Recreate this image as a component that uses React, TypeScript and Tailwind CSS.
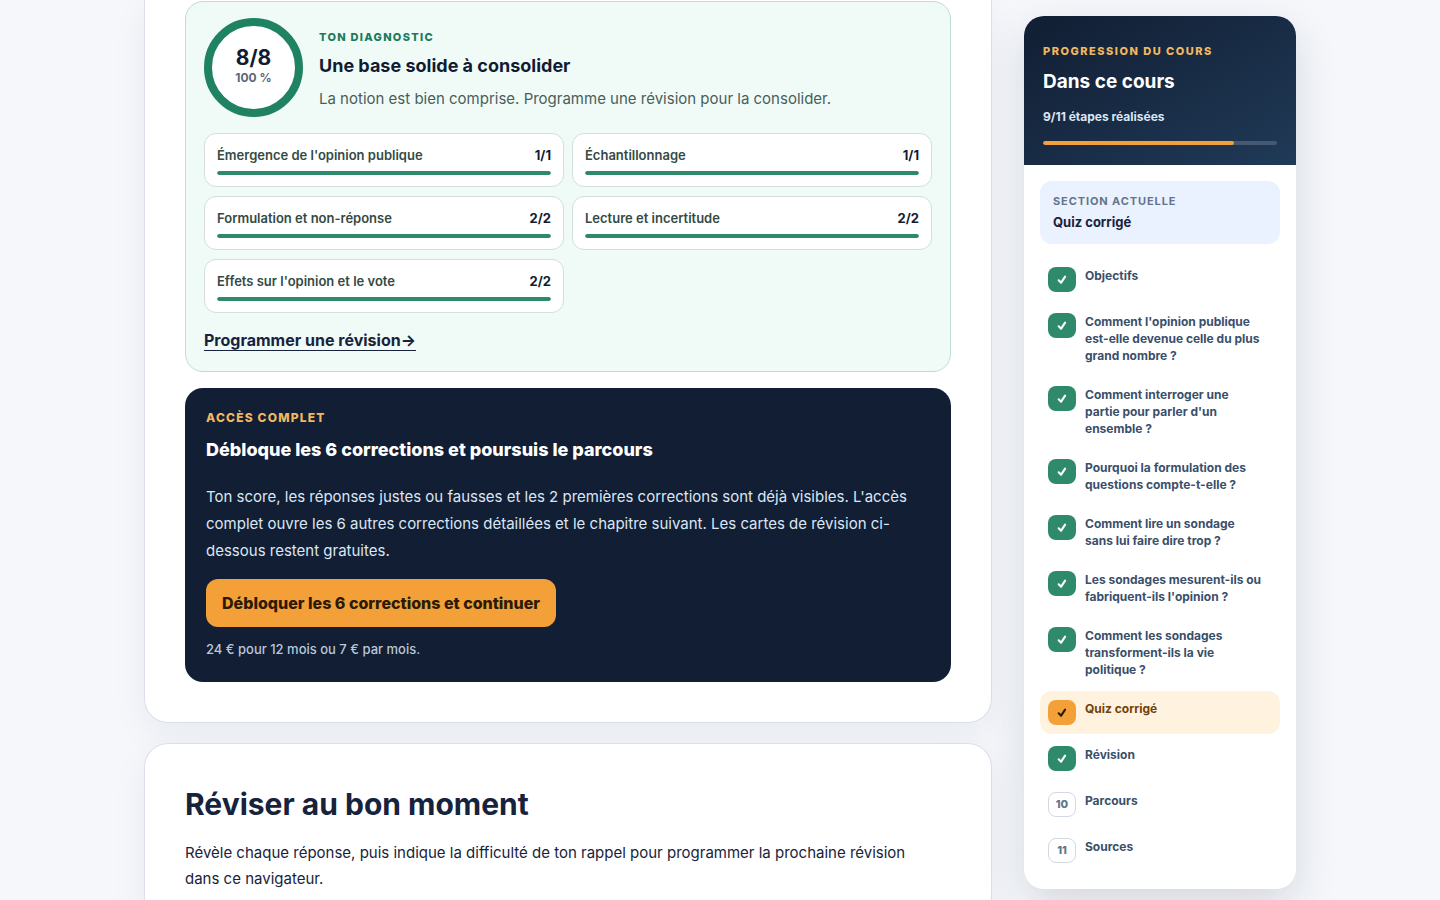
import React from "react";
import clsx from "clsx";

type Notion = { label: string; score: number; total: number };
type Step = { label: string; status: "done" | "current" | "todo" };

const notions: Notion[] = [
  { label: "Émergence de l'opinion publique", score: 1, total: 1 },
  { label: "Échantillonnage", score: 1, total: 1 },
  { label: "Formulation et non-réponse", score: 2, total: 2 },
  { label: "Lecture et incertitude", score: 2, total: 2 },
  { label: "Effets sur l'opinion et le vote", score: 2, total: 2 },
];

const steps: Step[] = [
  { label: "Objectifs", status: "done" },
  { label: "Comment l'opinion publique est-elle devenue celle du plus grand nombre ?", status: "done" },
  { label: "Comment interroger une partie pour parler d'un ensemble ?", status: "done" },
  { label: "Pourquoi la formulation des questions compte-t-elle ?", status: "done" },
  { label: "Comment lire un sondage sans lui faire dire trop ?", status: "done" },
  { label: "Les sondages mesurent-ils ou fabriquent-ils l'opinion ?", status: "done" },
  { label: "Comment les sondages transforment-ils la vie politique ?", status: "done" },
  { label: "Quiz corrigé", status: "current" },
  { label: "Révision", status: "done" },
  { label: "Parcours", status: "todo" },
  { label: "Sources", status: "todo" },
];

function CheckMark() {
  return (
    <svg viewBox="0 0 10 10" className="size-2.5" fill="none" stroke="currentColor" aria-hidden="true">
      <path d="M1.7 5.3 4.1 7.7 8.1 1.7" strokeWidth="2.1" strokeLinecap="round" strokeLinejoin="round" />
    </svg>
  );
}

function NotionCard({ label, score, total }: Notion) {
  return (
    <li className="flex flex-col gap-1.5 rounded-xl border border-[#d3dfdc] bg-white px-3 py-[11px]">
      <div className="flex items-center justify-between gap-3">
        <span className="text-[13px] leading-5 font-semibold text-[#344a45]">{label}</span>
        <strong className="text-[13px] leading-5 font-bold text-[#111c33]">
          {score}/{total}
        </strong>
      </div>
      <div className="h-1 overflow-hidden rounded-full bg-[#dfe9e6]">
        <div className="h-full rounded-full bg-[#2f8a6b]" style={{ width: `${(score / total) * 100}%` }} />
      </div>
    </li>
  );
}

function Diagnostic() {
  return (
    <section className="rounded-[18px] border border-[#bfddd3] bg-[#f0fbf8] px-[18px] pt-4 pb-5">
      <div className="flex items-center gap-4">
        <div className="flex size-[99px] shrink-0 flex-col items-center justify-center rounded-full border-8 border-[#1f8262] bg-white pb-[3px]">
          <strong className="text-[21px] leading-6 font-bold text-[#111c33]">8/8</strong>
          <span className="text-[12px] leading-4 font-bold text-[#5d6675]">100 %</span>
        </div>
        <div className="pt-[5px]">
          <p className="text-[11px] leading-4 font-extrabold tracking-[1.3px] text-[#1b7a5a] uppercase">Ton diagnostic</p>
          <h3 className="mt-[9px] text-[18px] leading-6 font-bold text-[#111c33]">Une base solide à consolider</h3>
          <p className="mt-2 text-[15px] leading-[26px] text-[#4a5e58]">
            La notion est bien comprise. Programme une révision pour la consolider.
          </p>
        </div>
      </div>
      <ul className="mt-4 grid grid-cols-2 gap-x-2 gap-y-[9px]">
        {notions.map((n) => (
          <NotionCard key={n.label} {...n} />
        ))}
      </ul>
      <div className="mt-[18px] flex">
        <a href="#revision" className="border-b border-[#17233c] text-[16px] leading-[19px] font-bold text-[#17233c]">
          Programmer une révision→
        </a>
      </div>
    </section>
  );
}

function UnlockPanel() {
  return (
    <section className="mt-4 rounded-[18px] bg-[#111e33] px-[21px] pt-[22px] pb-[23px]">
      <p className="text-[12px] leading-4 font-extrabold tracking-[1.2px] text-[#f0b95f] uppercase">Accès complet</p>
      <h3 className="mt-3 text-[18px] leading-6 font-extrabold text-white">
        Débloque les 6 corrections et poursuis le parcours
      </h3>
      <p className="mt-[21px] text-[15px] leading-[27px] text-[#dbe6f5]">
        Ton score, les réponses justes ou fausses et les 2 premières corrections sont déjà visibles. L'accès complet
        ouvre les 6 autres corrections détaillées et le chapitre suivant. Les cartes de révision ci-dessous restent
        gratuites.
      </p>
      <button
        type="button"
        className="mt-[15px] h-12 rounded-xl bg-[#f2a037] px-4 text-[16px] font-extrabold text-[#2c1a05]"
      >
        Débloquer les 6 corrections et continuer
      </button>
      <p className="mt-3 text-[13px] leading-5 font-medium text-[#b9c7da]">24 € pour 12 mois ou 7 € par mois.</p>
    </section>
  );
}

function StepRow({ step, index }: { step: Step; index: number }) {
  const current = step.status === "current";
  return (
    <li>
      <a
        href={`#etape-${index + 1}`}
        aria-current={current ? "step" : undefined}
        className={clsx(
          "flex min-h-[43px] items-start gap-[9px] rounded-xl py-[9px] pr-4 pl-2",
          current && "bg-[#fff2de]",
        )}
      >
        <span
          className={clsx(
            "flex h-[25px] w-7 shrink-0 items-center justify-center rounded-lg text-[11px] font-extrabold",
            step.status === "done" && "bg-[#2f8a6b] text-white",
            current && "bg-[#f2a037] text-[#2c1a05]",
            step.status === "todo" && "border border-[#d2d9e2] bg-white text-[#64748b]",
          )}
        >
          {step.status === "todo" ? index + 1 : <CheckMark />}
        </span>
        <span
          className={clsx("pb-px text-[12px] leading-[17px] font-bold", current ? "text-[#704308]" : "text-[#3a4f6b]")}
        >
          {step.label}
        </span>
      </a>
    </li>
  );
}

function CourseNav() {
  const done = 9;
  return (
    <aside className="mt-4 w-[272px] shrink-0 self-start rounded-[20px] bg-white shadow-[0_16px_44px_rgba(23,35,60,0.14)]">
      <header className="rounded-t-[20px] bg-linear-to-br from-[#111e33] to-[#203a57] px-[19px] pt-[27px] pb-5">
        <p className="text-[11px] leading-4 font-extrabold tracking-[1.5px] text-[#f0b95f] uppercase">
          Progression du cours
        </p>
        <h2 className="mt-[11px] text-[19px] leading-6 font-bold text-white">Dans ce cours</h2>
        <p className="mt-[15px] text-[12px] leading-4 font-bold text-[#dbe6f5]">{done}/11 étapes réalisées</p>
        <div className="mt-4 h-1 overflow-hidden rounded-full bg-[#475970]">
          <div className="h-full rounded-full bg-[#f2a037]" style={{ width: `${(done / steps.length) * 100}%` }} />
        </div>
      </header>
      <div className="px-4 pt-4 pb-[17px]">
        <div className="rounded-xl bg-[#eaf1ff] px-[13px] py-3">
          <p className="text-[11px] leading-4 font-bold tracking-[0.9px] text-[#64748b] uppercase">Section actuelle</p>
          <p className="mt-[3px] text-[13px] leading-5 font-bold text-[#17233c]">Quiz corrigé</p>
        </div>
        <nav aria-label="Étapes du cours">
          <ol className="mt-3.5 flex flex-col gap-[3px]">
            {steps.map((s, i) => (
              <StepRow key={s.label} step={s} index={i} />
            ))}
          </ol>
        </nav>
      </div>
    </aside>
  );
}

export default function App() {
  return (
    <div className="h-screen overflow-hidden bg-[#f5f7fb] px-8 font-[Inter,sans-serif] text-[#17233c]">
      <div className="mx-auto flex max-w-[1152px] gap-8">
        <main className="flex min-w-0 flex-1 flex-col gap-5">
          <article className="rounded-b-[24px] border border-t-0 border-[#dbe0e8] bg-white px-10 pt-px pb-10 shadow-[0_12px_36px_rgba(23,35,60,0.06)]">
            <Diagnostic />
            <UnlockPanel />
          </article>
          <article className="rounded-t-[24px] border border-b-0 border-[#dbe0e8] bg-white px-10 pt-10 pb-10 shadow-[0_12px_36px_rgba(23,35,60,0.06)]">
            <h2 className="text-3xl leading-10 font-bold">Réviser au bon moment</h2>
            <p className="mt-4 pr-5 text-[15px] leading-[26px]">
              Révèle chaque réponse, puis indique la difficulté de ton rappel pour programmer la prochaine révision dans
              ce navigateur.
            </p>
          </article>
        </main>
        <CourseNav />
      </div>
    </div>
  );
}
